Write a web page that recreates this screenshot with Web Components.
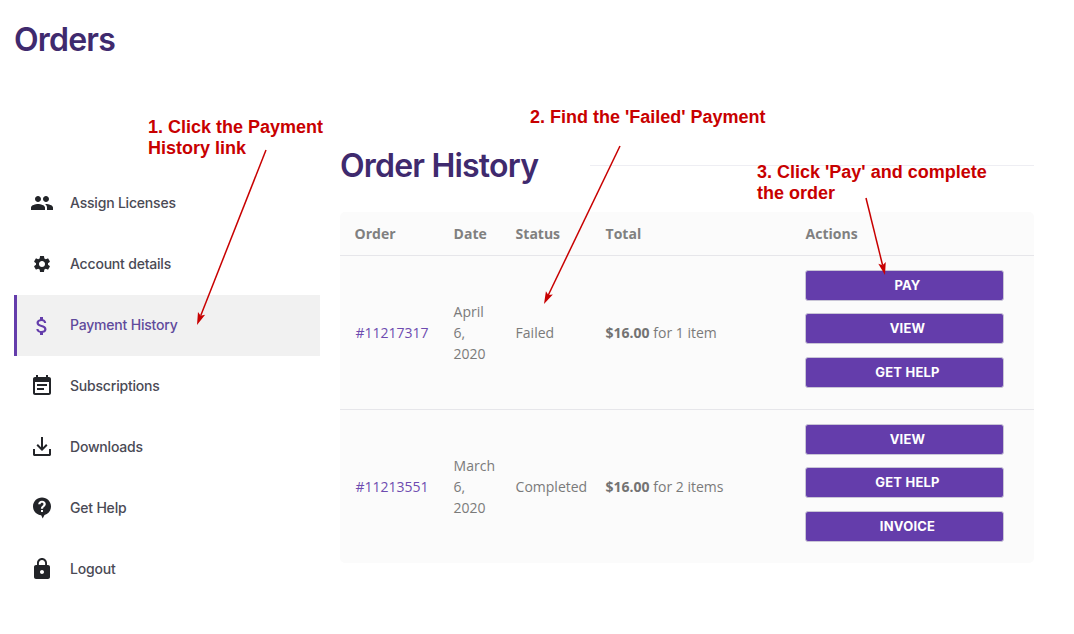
<!DOCTYPE html>
<html>
<head>
<meta charset="utf-8">
<title>Orders</title>
<style>
	html, body { margin: 0; background: #fff; }
</style>
</head>
<body>
<orders-page>
	<side-nav slot="nav">
		<nav-item icon="people">Assign Licenses</nav-item>
		<nav-item icon="cog">Account details</nav-item>
		<nav-item icon="dollar" active>Payment History</nav-item>
		<nav-item icon="event">Subscriptions</nav-item>
		<nav-item icon="download">Downloads</nav-item>
		<nav-item icon="help">Get Help</nav-item>
		<nav-item icon="lock">Logout</nav-item>
	</side-nav>
	<order-table slot="main">
		<order-row number="#11217317" date="April 6, 2020" status="Failed" price="$16.00" items="for 1 item">
			<action-button>Pay</action-button>
			<action-button>View</action-button>
			<action-button>Get Help</action-button>
		</order-row>
		<order-row number="#11213551" date="March 6, 2020" status="Completed" price="$16.00" items="for 2 items">
			<action-button>View</action-button>
			<action-button>Get Help</action-button>
			<action-button>Invoice</action-button>
		</order-row>
	</order-table>
	<call-out slot="notes" x="148" y="117" width="200" tip="197,325" tail="266,150">1. Click the Payment History link</call-out>
	<call-out slot="notes" x="530" y="107" width="260" tip="544,304" tail="620,146">2. Find the 'Failed' Payment</call-out>
	<call-out slot="notes" x="757" y="162" width="240" tip="885,275" tail="866,198">3. Click 'Pay' and complete the order</call-out>
</orders-page>

<script>
const ICONS = {
	people: '<path d="M16 11c1.66 0 2.99-1.34 2.99-3S17.66 5 16 5c-1.66 0-3 1.34-3 3s1.34 3 3 3zm-8 0c1.66 0 2.99-1.34 2.99-3S9.66 5 8 5C6.34 5 5 6.34 5 8s1.34 3 3 3zm0 2c-2.33 0-7 1.17-7 3.5V19h14v-2.5c0-2.33-4.67-3.5-7-3.5zm8 0c-.29 0-.62.02-.97.05 1.16.84 1.97 1.97 1.97 3.45V19h6v-2.5c0-2.33-4.67-3.5-7-3.5z"/>',
	cog: '<path transform="translate(12 12) scale(.84) translate(-12 -12)" d="M19.14 12.94c.04-.3.06-.61.06-.94 0-.32-.02-.64-.07-.94l2.03-1.58a.49.49 0 0 0 .12-.61l-1.92-3.32a.488.488 0 0 0-.59-.22l-2.39.96c-.5-.38-1.03-.7-1.62-.94l-.36-2.54a.484.484 0 0 0-.48-.41h-3.84c-.24 0-.43.17-.47.41l-.36 2.54c-.59.24-1.13.57-1.62.94l-2.39-.96c-.22-.08-.47 0-.59.22L2.74 8.87c-.12.21-.08.47.12.61l2.03 1.58c-.05.3-.09.63-.09.94s.02.64.07.94l-2.03 1.58a.49.49 0 0 0-.12.61l1.92 3.32c.12.22.37.29.59.22l2.39-.96c.5.38 1.03.7 1.62.94l.36 2.54c.05.24.24.41.48.41h3.84c.24 0 .44-.17.47-.41l.36-2.54c.59-.24 1.13-.56 1.62-.94l2.39.96c.22.08.47 0 .59-.22l1.92-3.32c.12-.22.07-.47-.12-.61l-2.01-1.58zM12 15.6c-1.98 0-3.6-1.62-3.6-3.6s1.62-3.6 3.6-3.6 3.6 1.62 3.6 3.6-1.62 3.6-3.6 3.6z"/>',
	dollar: '<path d="M11.8 10.9c-2.27-.59-3-1.2-3-2.15 0-1.09 1.01-1.85 2.7-1.85 1.78 0 2.44.85 2.5 2.1h2.21c-.07-1.72-1.12-3.3-3.21-3.81V3h-3v2.16c-1.94.42-3.5 1.68-3.5 3.61 0 2.31 1.91 3.46 4.7 4.13 2.5.6 3 1.48 3 2.41 0 .69-.49 1.79-2.7 1.79-2.06 0-2.87-.92-2.98-2.1h-2.2c.12 2.19 1.76 3.42 3.68 3.83V21h3v-2.15c1.95-.37 3.5-1.5 3.5-3.55 0-2.84-2.43-3.81-4.7-4.4z"/>',
	event: '<path d="M17 10H7v2h10v-2zm2-7h-1V1h-2v2H8V1H6v2H5c-1.11 0-1.99.9-1.99 2L3 19c0 1.1.89 2 2 2h14c1.1 0 2-.9 2-2V5c0-1.1-.9-2-2-2zm0 16H5V8h14v11zm-5-5H7v2h7v-2z"/>',
	download: '<path d="M11 2h2v10.2l3.1-3.1 1.4 1.4-5.5 5.5-5.5-5.5 1.4-1.4 3.1 3.1z"/><path d="M3 14h2v5h14v-5h2v5.5c0 .8-.7 1.5-1.5 1.5h-15C3.700 21 3 20.300 3 19.500z"/>',
	help: '<path fill-rule="evenodd" d="M12 1.500c-5 0-9 3.900-9 8.900 0 4.700 3.600 8.500 8.200 8.900l1.500 3.200 1.800-3.500c3.900-1 6.500-4.500 6.500-8.600 0-5-4-8.900-9-8.900zM11 14h2v2h-2zm1-9.200c2.200 0 3.800 1.400 3.800 3.300 0 1.300-.7 2-1.500 2.700-.7.6-1.200 1-1.200 2h-2.200c0-1.600.7-2.400 1.600-3.100.6-.5 1-.9 1-1.600 0-.8-.7-1.300-1.500-1.300-.9 0-1.500.6-1.600 1.500H8.200c.1-2.100 1.700-3.500 3.800-3.500z"/>',
	lock: '<path d="M18 8h-1V6c0-2.760-2.240-5-5-5S7 3.240 7 6v2H6c-1.100 0-2 .9-2 2v10c0 1.100.9 2 2 2h12c1.100 0 2-.9 2-2V10c0-1.100-.9-2-2-2zm-6 9c-1.100 0-2-.9-2-2s.9-2 2-2 2 .9 2 2-.9 2-2 2zm3.100-9H8.900V6c0-1.710 1.390-3.100 3.100-3.100 1.710 0 3.100 1.390 3.100 3.100v2z"/>'
};

class OrdersPage extends HTMLElement {
	constructor() {
		super();
		this.attachShadow({ mode: 'open' });
	}

	connectedCallback() {
		this.shadowRoot.innerHTML = `
		<style>
		:host { display: block; position: relative; height: 634px; overflow: hidden; padding: 0 40px 0 14px; box-sizing: border-box; }
		h1 { margin: 0; padding-top: 21px; height: 152px; box-sizing: border-box; font: 600 32px/38px Inter, "Noto Sans", sans-serif; letter-spacing: -.8px; color: #3f2a6e; }
		.cols { display: flex; gap: 20px; align-items: flex-start; }
		.nav { flex: 0 0 306px; }
		.main { flex: 1; margin-top: -11px; }
		.head { display: flex; align-items: center; gap: 50px; height: 48px; }
		h2 { margin: 0; font: 600 32px/50px Inter, "Noto Sans", sans-serif; letter-spacing: -.8px; color: #3f2a6e; white-space: nowrap; width: 200px; flex: none; align-self: flex-start; }
		.head i { flex: 1; height: 1px; background: #eeeef3; }
		.tbl { margin-top: 23px; }
		</style>
		<h1>Orders</h1>
		<div class="cols">
			<div class="nav"><slot name="nav"></slot></div>
			<div class="main">
				<div class="head"><h2>Order History</h2><i></i></div>
				<div class="tbl"><slot name="main"></slot></div>
			</div>
		</div>
		<slot name="notes"></slot>
		`;
	}
}

class SideNav extends HTMLElement {
	constructor() {
		super();
		this.attachShadow({ mode: 'open' });
		this.shadowRoot.innerHTML = `
		<style>
		:host { display: flex; flex-direction: column; margin-top: 21px; }
		</style>
		<slot></slot>
		`;
	}
}

class NavItem extends HTMLElement {
	constructor() {
		super();
		this.attachShadow({ mode: 'open' });
	}

	connectedCallback() {
		const icon = ICONS[this.getAttribute('icon')];
		this.shadowRoot.innerHTML = `
		<style>
		:host { display: flex; align-items: center; height: 61px; box-sizing: border-box; padding-left: 16px; gap: 16px; font: 500 14px/20px Inter, "Noto Sans", sans-serif; color: #4a4a55; letter-spacing: -.2px; }
		:host([active]) { background: #f1f1f1; border-left: 3px solid #643dab; padding-left: 13px; color: #5f4a9c; }
		svg { width: 24px; height: 24px; fill: #222428; flex: none; position: relative; top: -1px; }
		:host([active]) svg { fill: #643dab; top: 0; }
		span { position: relative; top: -1px; }
		</style>
		<svg viewBox="0 0 24 24">${icon}</svg>
		<span><slot></slot></span>
		`;
	}
}

class OrderTable extends HTMLElement {
	constructor() {
		super();
		this.attachShadow({ mode: 'open' });
		this.shadowRoot.innerHTML = `
		<style>
		:host { display: block; background: #fbfbfb; border-radius: 5px; font: 14px/21px "Open Sans", sans-serif; color: #7a7a7a; }
		.row { display: grid; grid-template-columns: 99px 62px 90px 200px 242px; height: 44px; align-items: center; border-bottom: 1px solid #e6e6ea; box-sizing: border-box; font-weight: 700; color: #808080; }
		.row span { padding-left: 14.6px; }
		</style>
		<div class="row"><span>Order</span><span>Date</span><span>Status</span><span>Total</span><span>Actions</span></div>
		<slot></slot>
		`;
	}
}

class OrderRow extends HTMLElement {
	constructor() {
		super();
		this.attachShadow({ mode: 'open' });
	}

	connectedCallback() {
		this.shadowRoot.innerHTML = `
		<style>
		:host { display: grid; grid-template-columns: 99px 62px 90px 200px 242px; align-items: center; height: 154px; box-sizing: border-box; border-bottom: 1px solid #e6e6ea; }
		:host(:last-child) { border-bottom: 0; height: 153px; }
		.cell { padding: 0 15px 0 14.6px; }
		.num { color: #6e4bb0; padding-left: 15.4px; }
		.date { width: 32px; box-sizing: content-box; }
		b { color: #737373; }
		.actions { padding: 0 0 8px 14px; display: flex; flex-direction: column; gap: 12.5px; width: 199px; box-sizing: content-box; }
		</style>
		<div class="cell num">${this.getAttribute('number')}</div>
		<div class="cell date">${this.getAttribute('date')}</div>
		<div class="cell">${this.getAttribute('status')}</div>
		<div class="cell"><b>${this.getAttribute('price')}</b> ${this.getAttribute('items')}</div>
		<div class="actions"><slot></slot></div>
		`;
	}
}

class ActionButton extends HTMLElement {
	constructor() {
		super();
		this.attachShadow({ mode: 'open' });
		this.shadowRoot.innerHTML = `
		<style>
		:host { display: flex; align-items: center; justify-content: center; height: 31px; box-sizing: border-box; padding-left: 6px; background: #643dab; border: 1px solid #c9c5d6; border-radius: 3px; color: #fff; font: 700 13px/1 Inter, "Noto Sans", sans-serif; text-transform: uppercase; letter-spacing: .2px; }
		</style>
		<slot></slot>
		`;
	}
}

class CallOut extends HTMLElement {
	constructor() {
		super();
		this.attachShadow({ mode: 'open' });
	}

	connectedCallback() {
		const [tx, ty] = this.getAttribute('tip').split(',').map(Number);
		const [sx, sy] = this.getAttribute('tail').split(',').map(Number);
		const a = Math.atan2(ty - sy, tx - sx);
		const wing = (d) => `${tx - 13 * Math.cos(a + d)},${ty - 13 * Math.sin(a + d)}`;
		const neckX = tx - 10 * Math.cos(a), neckY = ty - 10 * Math.sin(a);
		this.shadowRoot.innerHTML = `
		<style>
		:host { display: block; }
		.text { position: absolute; left: ${this.getAttribute('x')}px; top: ${this.getAttribute('y')}px; width: ${this.getAttribute('width')}px; font: 700 18px/21px "Liberation Sans", Arial, sans-serif; color: #c80000; }
		svg { position: absolute; left: 0; top: 0; width: 1074px; height: 634px; pointer-events: none; }
		</style>
		<svg viewBox="0 0 1074 634">
			<line x1="${sx}" y1="${sy}" x2="${neckX}" y2="${neckY}" stroke="#c80000" stroke-width="1.500"/>
			<polygon points="${tx},${ty} ${wing(0.3)} ${neckX},${neckY} ${wing(-0.3)}" fill="#c80000"/>
		</svg>
		<div class="text"><slot></slot></div>
		`;
	}
}

customElements.define('orders-page', OrdersPage);
customElements.define('side-nav', SideNav);
customElements.define('nav-item', NavItem);
customElements.define('order-table', OrderTable);
customElements.define('order-row', OrderRow);
customElements.define('action-button', ActionButton);
customElements.define('call-out', CallOut);
</script>
</body>
</html>
